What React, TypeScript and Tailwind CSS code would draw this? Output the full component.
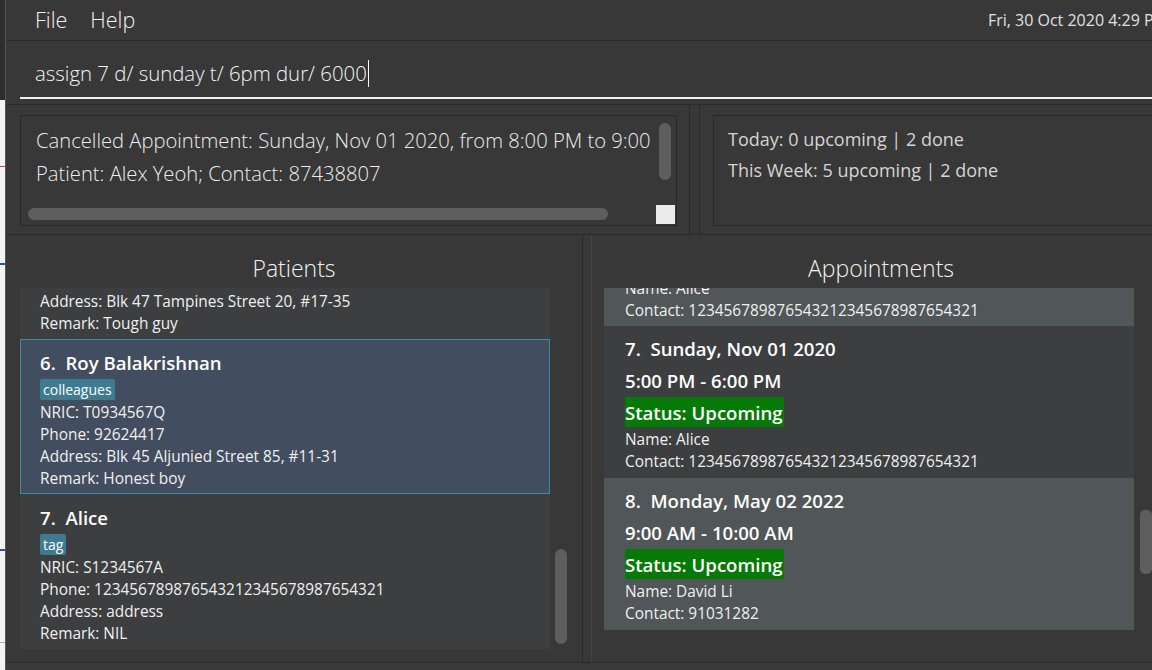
import React from 'react';

const sans = "font-['Open_Sans','Noto_Sans',sans-serif]";

type Patient = {
  no: number;
  name: string;
  tag: string;
  nric: string;
  phone: string;
  address: string;
  remark: string;
  selected?: boolean;
};

const patients: Patient[] = [
  {
    no: 6,
    name: 'Roy Balakrishnan',
    tag: 'colleagues',
    nric: 'T0934567Q',
    phone: '92624417',
    address: 'Blk 45 Aljunied Street 85, #11-31',
    remark: 'Honest boy',
    selected: true,
  },
  {
    no: 7,
    name: 'Alice',
    tag: 'tag',
    nric: 'S1234567A',
    phone: '123456789876543212345678987654321',
    address: 'address',
    remark: 'NIL',
  },
];

type Appt = {
  no: number;
  date: string;
  time: string;
  name: string;
  contact: string;
  odd: boolean;
};

const appts: Appt[] = [
  {
    no: 7,
    date: 'Sunday, Nov 01 2020',
    time: '5:00 PM - 6:00 PM',
    name: 'Alice',
    contact: '123456789876543212345678987654321',
    odd: false,
  },
  {
    no: 8,
    date: 'Monday, May 02 2022',
    time: '9:00 AM - 10:00 AM',
    name: 'David Li',
    contact: '91031282',
    odd: true,
  },
];

function SmallLine({ children }: { children: React.ReactNode }) {
  return <div className="h-[22px] leading-[25px] text-[15.4px] text-[#f0f0f0] whitespace-nowrap">{children}</div>;
}

function PatientCard({ p }: { p: Patient }) {
  return (
    <div
      className={`pl-[19px] pt-[10px] pb-[5px] border ${
        p.selected ? 'bg-[#424d5f] border-[#3e8aa0]' : 'bg-[#3c3e3f] border-transparent'
      }`}
    >
      <div className="h-[24px] leading-[26px] text-[18.6px] font-semibold text-white whitespace-nowrap">
        {p.no}.&nbsp;&nbsp;{p.name}
      </div>
      <div className="pt-[5px] h-[26px] flex">
        <span className="bg-[#3e7b91] text-white text-[14px] leading-[21px] px-[3px] rounded-[2px]">{p.tag}</span>
      </div>
      <SmallLine>NRIC: {p.nric}</SmallLine>
      <SmallLine>Phone: {p.phone}</SmallLine>
      <SmallLine>Address: {p.address}</SmallLine>
      <SmallLine>Remark: {p.remark}</SmallLine>
    </div>
  );
}

function ApptCard({ a }: { a: Appt }) {
  return (
    <div className={`pl-[21px] pt-[10px] pb-[7px] ${a.odd ? 'bg-[#515658]' : 'bg-[#3c3e3f]'}`}>
      <div className="h-[24px] leading-[26px] text-[18.6px] font-semibold text-white whitespace-nowrap">
        {a.no}.&nbsp;&nbsp;{a.date}
      </div>
      <div className="mt-[8px] h-[24px] leading-[26px] text-[18.6px] font-semibold text-white whitespace-nowrap">
        {a.time}
      </div>
      <div className="mt-[5px] h-[30px] flex">
        <span className="bg-[#067a06] text-white text-[18.6px] font-semibold leading-[31px] pr-[1px]">Status: Upcoming</span>
      </div>
      <SmallLine>Name: {a.name}</SmallLine>
      <SmallLine>Contact: {a.contact}</SmallLine>
    </div>
  );
}

export default function App() {
  return (
    <div className={`w-[1152px] h-[670px] overflow-hidden flex ${sans}`}>
      {/* window behind, peeking at the left edge */}
      <div className="w-[5px] shrink-0 flex flex-col bg-[#f3f3f3]">
        <div className="h-[100px] bg-[#2e2e2e]" />
        <div className="h-[66px]" />
        <div className="h-px bg-[#d04040]" />
        <div className="h-[96px]" />
        <div className="h-[2px] bg-[#3050c0]" />
        <div className="h-[284px]" />
        <div className="h-[2px] bg-[#3050c0]" />
        <div className="h-[91px]" />
        <div className="h-px bg-[#b0b0b0]" />
      </div>

      <div className="w-[1163px] shrink-0 flex flex-col bg-[#383838] border-l border-[#555555]">
        {/* menu bar */}
        <div className="h-[41px] shrink-0 flex items-center border-b border-[#2a2a2a] pl-[29px]">
          <span className="text-[21.5px] font-light text-[#f2f2f2]">File</span>
          <span className="ml-[23px] text-[21.5px] font-light text-[#f2f2f2]">Help</span>
          <span className="ml-auto text-[16px] text-[#e0e0e0] whitespace-nowrap">Fri, 30 Oct 2020 4:29 PM</span>
        </div>

        {/* command box */}
        <div className="h-[64px] shrink-0 pl-[14px] pt-[7px] border-b border-[#2a2a2a]">
          <div className="h-[51px] border-b-2 border-[#f0f0f0] flex items-center pl-[15px] pt-[2px]">
            <span className="text-[20.4px] font-light text-[#f4f4f4] whitespace-nowrap">assign 7 d/ sunday t/ 6pm dur/ 6000</span>
            <span className="ml-[1px] w-px h-[27px] bg-white" />
          </div>
        </div>

        {/* result + stats */}
        <div className="h-[130px] shrink-0 flex border-b border-[#2a2a2a]">
          <div className="w-[684px] shrink-0 pl-[14px] pr-[12px] pt-[10px] pb-[8px] border-r border-[#2a2a2a]">
            <div className="h-full border border-[#282828] flex">
              <div className="flex-1 min-w-0 flex flex-col">
                <div className="flex-1 pl-[15px] pt-[8px] overflow-hidden">
                  <div className="h-[33px] leading-[33px] text-[20.2px] font-light text-[#ececec] whitespace-nowrap">
                    Cancelled Appointment: Sunday, Nov 01 2020, from 8:00 PM to 9:00
                  </div>
                  <div className="h-[33px] leading-[33px] text-[20.2px] font-light text-[#ececec] whitespace-nowrap">
                    Patient: Alex Yeoh; Contact: 87438807
                  </div>
                </div>
                <div className="h-[24px] pl-[7px] pt-[7px]">
                  <div className="w-[580px] h-[12px] rounded-full bg-[#5e5e5e]" />
                </div>
              </div>
              <div className="w-[21px] shrink-0 flex flex-col items-start">
                <div className="mt-[7px] ml-[4px] w-[12px] h-[57px] rounded-full bg-[#5e5e5e]" />
                <div className="mt-auto ml-[1px] w-[19px] h-[19px] bg-[#ececec] mb-[1px]" />
              </div>
            </div>
          </div>
          <div className="w-[10px] shrink-0 border-r border-[#2a2a2a]" />
          <div className="flex-1 pl-[13px] pt-[10px] pb-[8px]">
            <div className="h-full border border-[#282828] border-r-0 pl-[14px] pt-[8px]">
              <div className="h-[31px] leading-[31px] text-[18px] text-[#d4d4d4] whitespace-nowrap">Today: 0 upcoming | 2 done</div>
              <div className="h-[31px] leading-[31px] text-[18px] text-[#d4d4d4] whitespace-nowrap">This Week: 5 upcoming | 2 done</div>
            </div>
          </div>
        </div>

        {/* lists */}
        <div className="h-[428px] shrink-0 flex border-b border-[#2a2a2a]">
          {/* patients */}
          <div className="w-[577px] shrink-0 flex flex-col border-r border-[#2a2a2a] pl-[14px] pb-[13px]">
            <div className="h-[53px] shrink-0 flex items-center justify-center pr-[14px] pt-[13px]">
              <span className="text-[23px] font-light text-[#f2f2f2]">Patients</span>
            </div>
            <div className="flex-1 flex min-h-0">
              <div className="w-[530px] shrink-0 overflow-hidden">
                <div className="h-[51px] overflow-hidden flex flex-col justify-end pl-[20px] pb-[6px] bg-[#3c3e3f]">
                  <SmallLine>Address: Blk 47 Tampines Street 20, #17-35</SmallLine>
                  <SmallLine>Remark: Tough guy</SmallLine>
                </div>
                {patients.map((p) => (
                  <PatientCard key={p.no} p={p} />
                ))}
              </div>
              <div className="ml-[5px] w-[12px] pt-[261px]">
                <div className="h-[95px] rounded-full bg-[#5e5e5e]" />
              </div>
            </div>
          </div>

          <div className="w-[9px] shrink-0 border-r border-[#444444]" />

          {/* appointments */}
          <div className="flex-1 flex flex-col pl-[12px] pb-[13px]">
            <div className="h-[53px] shrink-0 flex items-center justify-center pr-[10px] pt-[13px]">
              <span className="text-[23px] font-light text-[#f2f2f2]">Appointments</span>
            </div>
            <div className="flex-1 flex min-h-0">
              <div className="w-[530px] shrink-0 overflow-hidden">
                <div className="h-[38px] overflow-hidden flex flex-col justify-end pl-[21px] pb-[6px] bg-[#515658]">
                  <SmallLine>Name: Alice</SmallLine>
                  <SmallLine>Contact: 123456789876543212345678987654321</SmallLine>
                </div>
                {appts.map((a) => (
                  <ApptCard key={a.no} a={a} />
                ))}
              </div>
              <div className="ml-[6px] w-[12px] pt-[222px]">
                <div className="h-[64px] rounded-[5px] bg-[#5e5e5e]" />
              </div>
            </div>
          </div>
        </div>

        <div className="flex-1 bg-[#3a3a3a]" />
      </div>
    </div>
  );
}
